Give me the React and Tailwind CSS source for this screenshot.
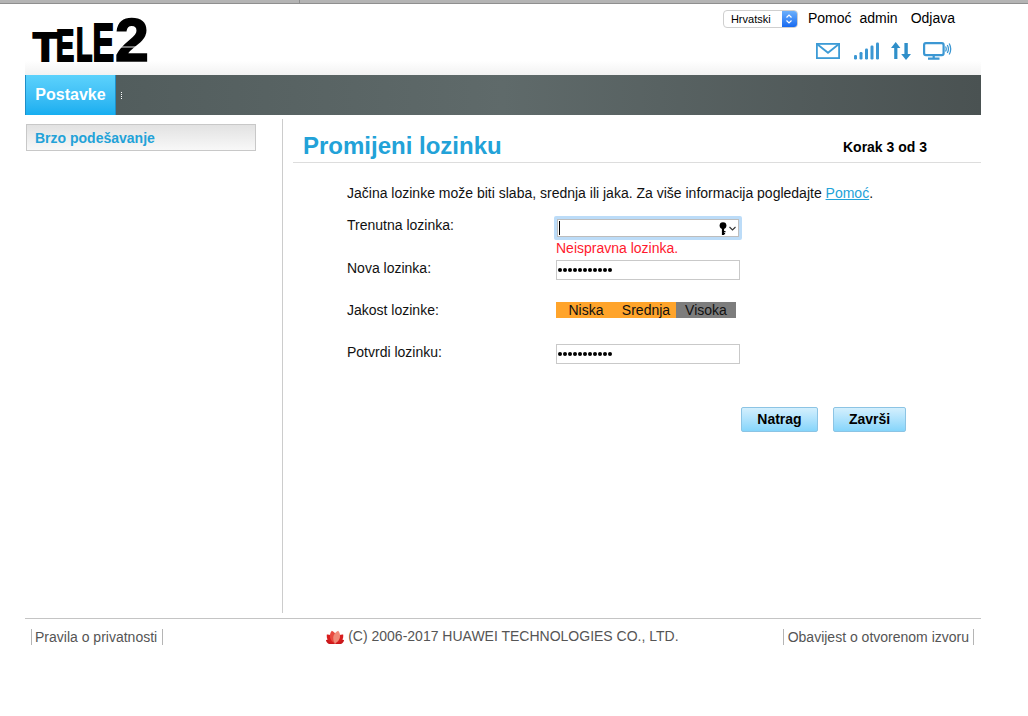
import React from "react";

const font = { fontFamily: '"Liberation Sans", Arial, sans-serif' };

function LogoGlyph({ ch, x, sx, size, sw = 2.2 }) {
  return (
    <text transform={`translate(${x} 47) scale(${sx} 1)`} fontFamily="Liberation Sans" fontWeight="700" fontSize={size} stroke="#000" strokeWidth={sw} fill="#000">{ch}</text>
  );
}

function Logo() {
  return (
    <svg width="116" height="48" viewBox="0 0 116 48" className="block overflow-visible">
      <LogoGlyph ch="T" x={0} sx={0.98} size={41} />
      <LogoGlyph ch="E" x={23} sx={0.62} size={44} />
      <LogoGlyph ch="L" x={43} sx={0.56} size={48} />
      <LogoGlyph ch="E" x={59.5} sx={0.6} size={54} />
      <LogoGlyph ch="2" x={82} sx={0.98} size={62} sw={1.6} />
      <path d="M84 33 L115 33" stroke="#fff" strokeWidth="0.9" />
    </svg>
  );
}

function Mail() {
  return (
    <svg width="24" height="16" viewBox="0 0 24 16" fill="none" stroke="#3d9bd6" strokeWidth="1.8">
      <rect x="0.9" y="0.9" width="22.2" height="14.2" />
      <path d="M1 1 L12 9.8 L23 1" />
    </svg>
  );
}

function Signal() {
  return (
    <svg width="26" height="18" viewBox="0 0 26 18" fill="#3b97d3">
      <rect x="0" y="13" width="3" height="4.5" rx="1.2" />
      <rect x="5.5" y="10" width="3" height="7.5" rx="1.2" />
      <rect x="11" y="6.5" width="3" height="11" rx="1.2" />
      <rect x="16.5" y="3.5" width="3" height="14" rx="1.2" />
      <rect x="22" y="0.5" width="3" height="17" rx="1.2" />
    </svg>
  );
}

function Arrows() {
  return (
    <svg width="20" height="18" viewBox="0 0 20 18" fill="#2f8fc9">
      <path d="M4.7 0 L9.4 6 H6.4 V17 H3.2 V6 H0 Z" />
      <path d="M15 18 L20 12 H16.8 V1 H13.4 V12 H10.2 Z" />
    </svg>
  );
}

function Monitor() {
  return (
    <svg width="29" height="18" viewBox="0 0 29 18" fill="none" stroke="#3b97d3">
      <rect x="1.1" y="1.1" width="19.5" height="12" rx="1.8" strokeWidth="2.2" />
      <path d="M10.7 13 V15.5 M5 16.6 H16.5" strokeWidth="2.2" />
      <path d="M22.5 4.5 Q24 7 22.5 9.5 M24.3 3 Q26.6 7 24.3 11 M26.2 1.5 Q29.2 7 26.2 12.5" strokeWidth="1.3" />
    </svg>
  );
}

function Huawei() {
  const petals = [
    { a: -70, s: 0.74, c: "#c9181c" },
    { a: 70, s: 0.74, c: "#c9181c" },
    { a: -42, s: 0.92, c: "#d81e1e" },
    { a: 42, s: 0.92, c: "#d81e1e" },
    { a: -14, s: 1, c: "#e8493f" },
    { a: 14, s: 1, c: "#f08a78" },
  ];
  return (
    <svg width="18" height="14" viewBox="0 0 18 14">
      {petals.map((p) => (
        <path
          key={p.a}
          d="M9 13.6 C4.4 9.5 4.8 3.6 9 0.4 C13.2 3.6 13.6 9.5 9 13.6 Z"
          fill={p.c}
          transform={`rotate(${p.a} 9 13.6) translate(9 13.6) scale(${p.s}) translate(-9 -13.6)`}
        />
      ))}
    </svg>
  );
}

function Key() {
  return (
    <svg width="19" height="13" viewBox="0 0 19 13">
      <circle cx="4" cy="3.6" r="3.4" fill="#000" />
      <rect x="2.9" y="4" width="2.2" height="9" fill="#000" />
      <rect x="4.5" y="9" width="2" height="1.3" fill="#000" />
      <rect x="4.5" y="11" width="1.6" height="1.3" fill="#000" />
      <path d="M10.5 5 L13.5 8 L16.5 5" fill="none" stroke="#333" strokeWidth="1.1" />
    </svg>
  );
}

function Dots() {
  return (
    <span className="flex gap-[1px] pl-[1px]">
      {Array.from({ length: 11 }).map((_, i) => (
        <span key={i} className="w-[4px] h-[4px] rounded-full bg-black" />
      ))}
    </span>
  );
}

function Row({ label, children, className }) {
  return (
    <div className={`flex ${className}`}>
      <div className="w-[208px] text-[14px] leading-[16px] text-[#111]">{label}</div>
      {children}
    </div>
  );
}

const btn = "h-[25px] rounded-[2px] border border-[#8cc4e4] bg-gradient-to-b from-[#d3effd] to-[#85d5fb] text-[14px] font-bold text-black";

export default function App() {
  return (
    <div style={font} className="w-[1028px] h-[716px] bg-white overflow-hidden">
      <div className="h-[4px] bg-[#b4b4b4] border-b border-[#8f8f8f]">
        <div className="w-[300px] h-full border-r border-[#8f8f8f]" />
      </div>
      <div className="w-[956px] ml-[25px]">
        <header className="h-[71px] bg-gradient-to-b from-white from-80% to-[#f2f2f2] flex justify-between">
          <div className="pl-[8px] pt-[10px]"><Logo /></div>
          <div className="flex flex-col items-end pr-[26px] pt-[5px]">
            <div className="flex items-center h-[18px] text-[14px] text-black">
              <div className="w-[75px] h-[18px] mt-[2px] rounded-[4px] border border-[#cfcfcf] bg-white flex justify-between overflow-hidden mr-[10px] relative">
                <span className="text-[11px] leading-[16px] pl-[7px]">Hrvatski</span>
                <span className="w-[15px] bg-gradient-to-b from-[#6cb0fb] to-[#1669f0] flex items-center justify-center">
                  <svg width="8" height="12" viewBox="0 0 8 12" fill="none" stroke="#fff" strokeWidth="1.2"><path d="M1.5 4.5 L4 2 L6.5 4.5 M1.5 7.5 L4 10 L6.5 7.5" /></svg>
                </span>
              </div>
              <span className="mr-[8px]">Pomoć</span>
              <span className="mr-[13px]">admin</span>
              <span>Odjava</span>
            </div>
            <div className="flex items-center mt-[15px] mr-[3px]">
              <span className="mr-[14px] flex"><Mail /></span>
              <span className="mr-[11px] flex"><Signal /></span>
              <span className="mr-[12px] flex"><Arrows /></span>
              <span className="flex"><Monitor /></span>
            </div>
          </div>
        </header>

        <nav className="h-[40px] flex bg-gradient-to-r from-[#4f5a5a] via-[#5f6a6a] via-50% to-[#4a5252]">
          <div className="w-[91px] border-x border-[#1f8fc8] bg-gradient-to-b from-[#5cd2fc] to-[#15aef0] flex items-center justify-center">
            <span className="text-[16px] font-bold text-white">Postavke</span>
          </div>
          <span className="ml-[5px] mt-[17px] w-[1px] h-[7px] border-l border-dotted border-white" />
        </nav>

        <main className="flex h-[498px]">
          <aside className="w-[258px] border-r border-[#cccccc] mt-[4px] shrink-0">
            <div className="w-[230px] h-[27px] mt-[5px] ml-[1px] border border-[#c8c8c8] bg-gradient-to-b from-[#e2e2e2] to-[#f8f8f8] pl-[8px] pt-[1px] text-[14px] leading-[25px] font-bold text-[#22a2d8]">
              Brzo podešavanje
            </div>
          </aside>
          <section className="flex-1 min-w-0">
            <div className="h-[48px] ml-[10px] pl-[10px] border-b border-[#dddddd] flex justify-between items-center pt-[14px]">
              <h1 className="text-[24px] font-bold text-[#22a2d8] leading-[32px]">Promijeni lozinku</h1>
              <span className="text-[14px] font-bold text-black mr-[54px] leading-[16px] pt-[2px]">Korak 3 od 3</span>
            </div>
            <div className="pl-[64px] pt-[22px]">
              <p className="text-[14px] leading-[16px] text-[#111]">
                Jačina lozinke može biti slaba, srednja ili jaka. Za više informacija pogledajte{" "}
                <span className="text-[#22a2d8] underline">Pomoć</span>.
              </p>
              <Row label="Trenutna lozinka:" className="mt-[16px]">
                <div className="w-[188px] h-[24px] -ml-[1px] -mt-[1px] rounded-[2px] border-[3px] border-[#bcdcf8]">
                  <div className="h-full border border-[#bdbdbd] bg-white flex items-center justify-between pl-[1px]">
                    <span className="w-[1px] h-[14px] bg-black" />
                    <Key />
                  </div>
                </div>
              </Row>
              <div className="pl-[209px] text-[14px] leading-[16px] text-[#ff1a2e]">Neispravna lozinka.</div>
              <Row label="Nova lozinka:" className="mt-[4px]">
                <div className="ml-[1px] w-[184px] h-[20px] border border-[#c9c9c9] bg-white flex items-center"><Dots /></div>
              </Row>
              <Row label="Jakost lozinke:" className="mt-[22px]">
                <div className="ml-[1px] flex h-[16px] text-[14px] leading-[16px] text-[#111] text-center">
                  <span className="w-[60px] bg-[#ffa42b]">Niska</span>
                  <span className="w-[60px] bg-[#ffa42b]">Srednja</span>
                  <span className="w-[60px] bg-[#7d7d7d]">Visoka</span>
                </div>
              </Row>
              <Row label="Potvrdi lozinku:" className="mt-[26px]">
                <div className="ml-[1px] w-[184px] h-[20px] border border-[#c9c9c9] bg-white flex items-center"><Dots /></div>
              </Row>
              <div className="flex ml-[394px] mt-[43px] gap-[15px]">
                <button className={`${btn} w-[77px]`}>Natrag</button>
                <button className={`${btn} w-[73px]`}>Završi</button>
              </div>
            </div>
          </section>
        </main>

        <footer className="h-[36px] border-t border-[#c4c4c4] flex items-center text-[14px] text-[#555] mt-[5px]">
          <div className="ml-[6px] border-x border-[#b5b5b5] pl-[3px] pr-[5px] h-[16px] leading-[16px] shrink-0">Pravila o privatnosti</div>
          <div className="flex items-center gap-[4px] ml-[163px] shrink-0">
            <Huawei />
            <span>(C) 2006-2017 HUAWEI TECHNOLOGIES CO., LTD.</span>
          </div>
          <div className="ml-auto mr-[7px] border-x border-[#b5b5b5] px-[4px] h-[16px] leading-[16px] shrink-0">Obavijest o otvorenom izvoru</div>
        </footer>
      </div>
    </div>
  );
}
